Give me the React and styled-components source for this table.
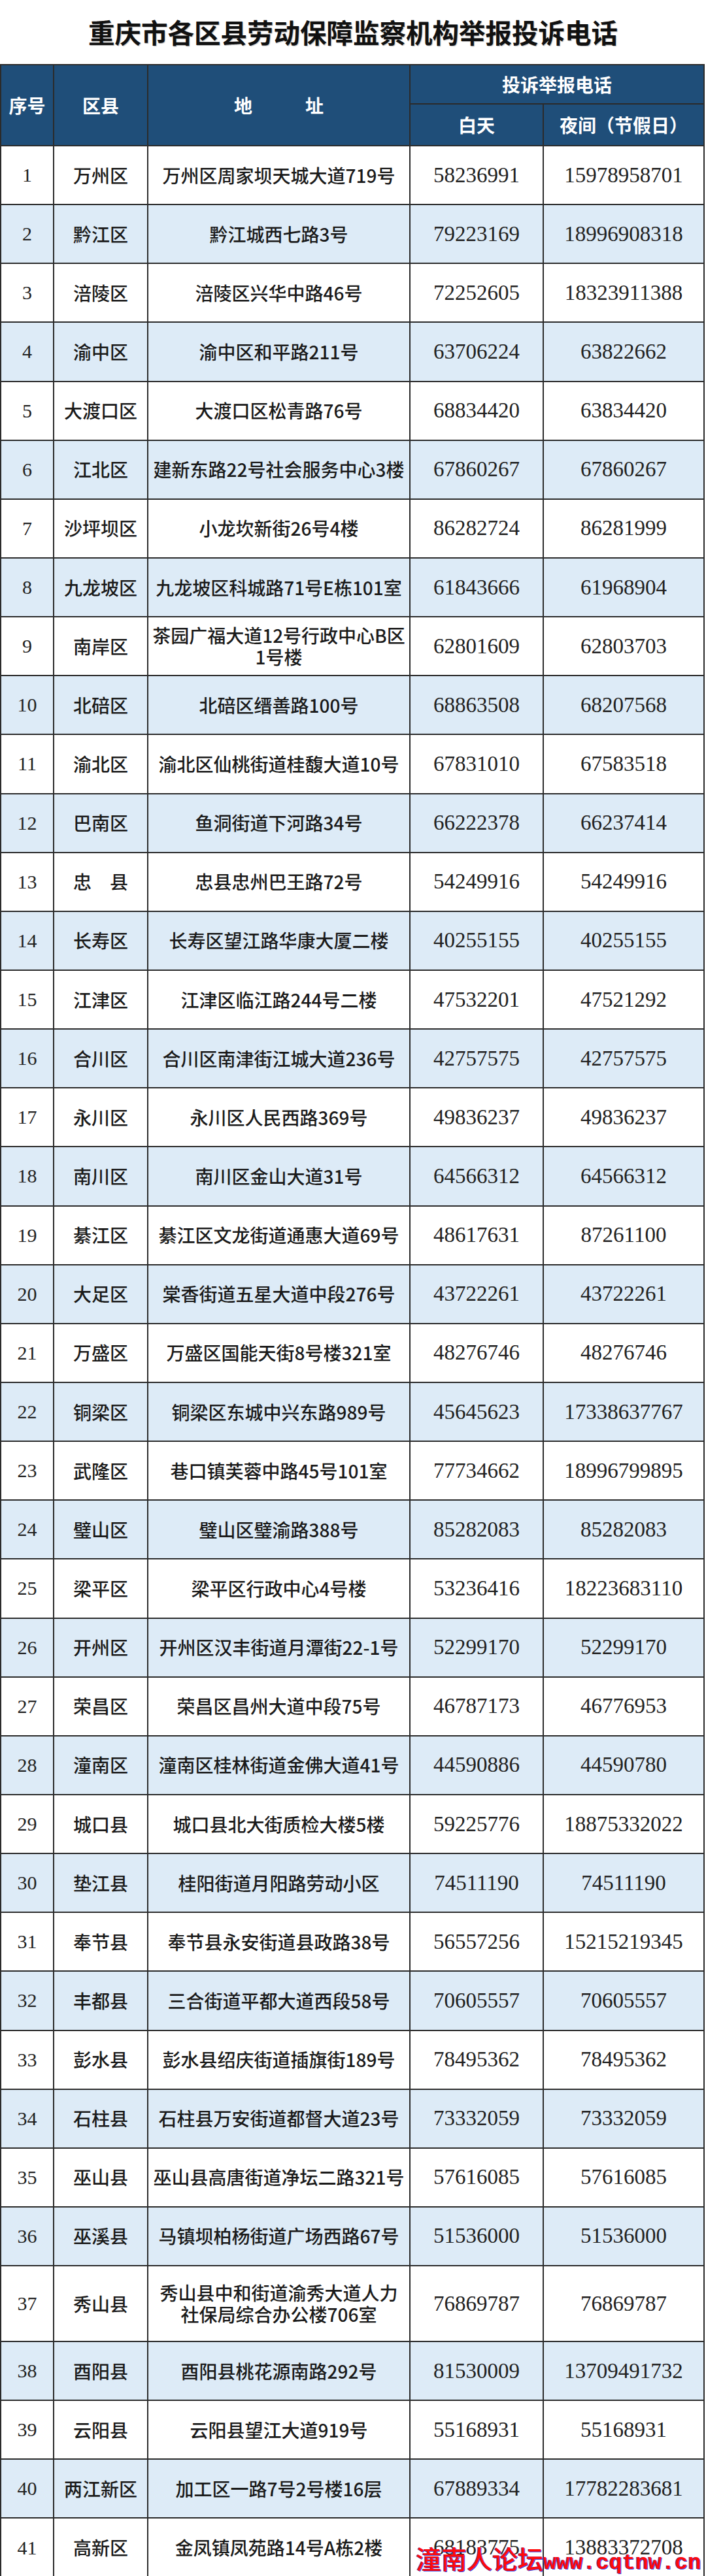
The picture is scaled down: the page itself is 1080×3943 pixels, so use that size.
import React from "react";
import styled, { createGlobalStyle } from "styled-components";

const Global = createGlobalStyle`
  html, body { margin: 0; padding: 0; background: #ffffff; }
  body { width: 1080px; font-family: "Noto Sans CJK SC", "Noto Sans", sans-serif; }
  * { box-sizing: border-box; }
`;

const COLS = "83px 144px 401px 204px 246px";
const LINE = "#2b2b2b";

const Page = styled.div`
  position: relative;
  width: 1080px;
  height: 3943px;
  background: #fff;
`;

const Title = styled.h1`
  margin: 0;
  height: 98px;
  display: flex;
  align-items: center;
  justify-content: center;
  padding-bottom: 2px;
  font-family: "Noto Sans CJK SC", sans-serif;
  font-weight: 700;
  font-size: 40.5px;
  color: #111;
  text-shadow: 1px 1px 1px rgba(0, 0, 0, 0.25);
`;

const Table = styled.div`
  width: 1078px;
`;

const Head = styled.div`
  display: grid;
  grid-template-columns: ${COLS};
  grid-template-rows: 60px 62px;
  background: #1f4e79;
  border-top: 2px solid ${LINE};
  border-bottom: 2px solid ${LINE};
`;

const HeadCell = styled.div`
  grid-column: ${(p) => p.$col};
  grid-row: ${(p) => p.$row};
  display: flex;
  align-items: center;
  justify-content: center;
  gap: ${(p) => p.$gap || 0}px;
  color: #fff;
  font-family: "Noto Sans CJK SC", sans-serif;
  font-weight: 700;
  font-size: 28px;
  border-right: 2px solid ${LINE};
  border-left: ${(p) => (p.$first ? `2px solid ${LINE}` : "none")};
  border-bottom: ${(p) => (p.$under ? `2px solid ${LINE}` : "none")};
  white-space: nowrap;
`;

const Row = styled.div`
  display: grid;
  grid-template-columns: ${COLS};
  height: ${(p) => (p.$tall ? 116 : 90.15)}px;
  background: ${(p) => (p.$alt ? "#ddebf7" : "#ffffff")};
  border-bottom: 2px solid ${LINE};
`;

const Cell = styled.div`
  display: flex;
  flex-direction: column;
  align-items: center;
  justify-content: center;
  text-align: center;
  border-right: 2px solid ${LINE};
  border-left: ${(p) => (p.$first ? `2px solid ${LINE}` : "none")};
  color: #1a1a1a;
  white-space: nowrap;
`;

const Num = styled.span`
  font-family: "Liberation Serif", "DejaVu Serif", serif;
  font-size: 30px;
  color: #222;
`;

const District = styled.span`
  font-family: "Noto Sans CJK SC", sans-serif;
  font-weight: 500;
  font-size: 28px;
  line-height: 33px;
`;

const Address = styled.span`
  font-family: "Noto Sans CJK SC", sans-serif;
  font-weight: 500;
  font-size: 28px;
  line-height: 33px;
  display: block;
`;

const Phone = styled.span`
  font-family: "Liberation Serif", "DejaVu Serif", serif;
  font-size: 33px;
  color: #222;
`;

const Watermark = styled.div`
  position: absolute;
  left: 636px;
  top: 3891px;
  display: flex;
  align-items: baseline;
  line-height: 48px;
  color: #ff0a0a;
  text-shadow: 1px 1px 0 #3b3bd6, -1px 0 0 #5a5ae0;
  white-space: nowrap;
  pointer-events: none;
`;

const MarkCn = styled.span`
  font-family: "Noto Sans CJK SC", sans-serif;
  font-weight: 500;
  font-size: 39px;
  letter-spacing: 0;
`;

const MarkUrl = styled.span`
  font-family: "Liberation Mono", "DejaVu Sans Mono", monospace;
  font-weight: 700;
  font-size: 33.5px;
`;

const rows = [
  ["万州区", ["万州区周家坝天城大道719号"], "58236991", "15978958701"],
  ["黔江区", ["黔江城西七路3号"], "79223169", "18996908318"],
  ["涪陵区", ["涪陵区兴华中路46号"], "72252605", "18323911388"],
  ["渝中区", ["渝中区和平路211号"], "63706224", "63822662"],
  ["大渡口区", ["大渡口区松青路76号"], "68834420", "63834420"],
  ["江北区", ["建新东路22号社会服务中心3楼"], "67860267", "67860267"],
  ["沙坪坝区", ["小龙坎新街26号4楼"], "86282724", "86281999"],
  ["九龙坡区", ["九龙坡区科城路71号E栋101室"], "61843666", "61968904"],
  ["南岸区", ["茶园广福大道12号行政中心B区", "1号楼"], "62801609", "62803703"],
  ["北碚区", ["北碚区缙善路100号"], "68863508", "68207568"],
  ["渝北区", ["渝北区仙桃街道桂馥大道10号"], "67831010", "67583518"],
  ["巴南区", ["鱼洞街道下河路34号"], "66222378", "66237414"],
  ["忠　县", ["忠县忠州巴王路72号"], "54249916", "54249916"],
  ["长寿区", ["长寿区望江路华康大厦二楼"], "40255155", "40255155"],
  ["江津区", ["江津区临江路244号二楼"], "47532201", "47521292"],
  ["合川区", ["合川区南津街江城大道236号"], "42757575", "42757575"],
  ["永川区", ["永川区人民西路369号"], "49836237", "49836237"],
  ["南川区", ["南川区金山大道31号"], "64566312", "64566312"],
  ["綦江区", ["綦江区文龙街道通惠大道69号"], "48617631", "87261100"],
  ["大足区", ["棠香街道五星大道中段276号"], "43722261", "43722261"],
  ["万盛区", ["万盛区国能天街8号楼321室"], "48276746", "48276746"],
  ["铜梁区", ["铜梁区东城中兴东路989号"], "45645623", "17338637767"],
  ["武隆区", ["巷口镇芙蓉中路45号101室"], "77734662", "18996799895"],
  ["璧山区", ["璧山区璧渝路388号"], "85282083", "85282083"],
  ["梁平区", ["梁平区行政中心4号楼"], "53236416", "18223683110"],
  ["开州区", ["开州区汉丰街道月潭街22-1号"], "52299170", "52299170"],
  ["荣昌区", ["荣昌区昌州大道中段75号"], "46787173", "46776953"],
  ["潼南区", ["潼南区桂林街道金佛大道41号"], "44590886", "44590780"],
  ["城口县", ["城口县北大街质检大楼5楼"], "59225776", "18875332022"],
  ["垫江县", ["桂阳街道月阳路劳动小区"], "74511190", "74511190"],
  ["奉节县", ["奉节县永安街道县政路38号"], "56557256", "15215219345"],
  ["丰都县", ["三合街道平都大道西段58号"], "70605557", "70605557"],
  ["彭水县", ["彭水县绍庆街道插旗街189号"], "78495362", "78495362"],
  ["石柱县", ["石柱县万安街道都督大道23号"], "73332059", "73332059"],
  ["巫山县", ["巫山县高唐街道净坛二路321号"], "57616085", "57616085"],
  ["巫溪县", ["马镇坝柏杨街道广场西路67号"], "51536000", "51536000"],
  ["秀山县", ["秀山县中和街道渝秀大道人力", "社保局综合办公楼706室"], "76869787", "76869787", true],
  ["酉阳县", ["酉阳县桃花源南路292号"], "81530009", "13709491732"],
  ["云阳县", ["云阳县望江大道919号"], "55168931", "55168931"],
  ["两江新区", ["加工区一路7号2号楼16层"], "67889334", "17782283681"],
  ["高新区", ["金凤镇凤苑路14号A栋2楼"], "68183775", "13883372708"],
];

export default function App() {
  return (
    <Page>
      <Global />
      <Title>重庆市各区县劳动保障监察机构举报投诉电话</Title>
      <Table>
        <Head>
          <HeadCell $col="1" $row="1 / span 2" $first>序号</HeadCell>
          <HeadCell $col="2" $row="1 / span 2">区县</HeadCell>
          <HeadCell $col="3" $row="1 / span 2" $gap={81}>
            <span>地</span>
            <span>址</span>
          </HeadCell>
          <HeadCell $col="4 / span 2" $row="1" $under>投诉举报电话</HeadCell>
          <HeadCell $col="4" $row="2">白天</HeadCell>
          <HeadCell $col="5" $row="2">夜间（节假日）</HeadCell>
        </Head>
        {rows.map(([district, addr, day, night, tall], i) => (
          <Row key={i} $alt={i % 2 === 1} $tall={tall}>
            <Cell $first>
              <Num>{i + 1}</Num>
            </Cell>
            <Cell>
              <District>{district}</District>
            </Cell>
            <Cell>
              {addr.map((line, j) => (
                <Address key={j}>{line}</Address>
              ))}
            </Cell>
            <Cell>
              <Phone>{day}</Phone>
            </Cell>
            <Cell>
              <Phone>{night}</Phone>
            </Cell>
          </Row>
        ))}
      </Table>
      <Watermark>
        <MarkCn>潼南人论坛</MarkCn>
        <MarkUrl>www.cqtnw.cn</MarkUrl>
      </Watermark>
    </Page>
  );
}
